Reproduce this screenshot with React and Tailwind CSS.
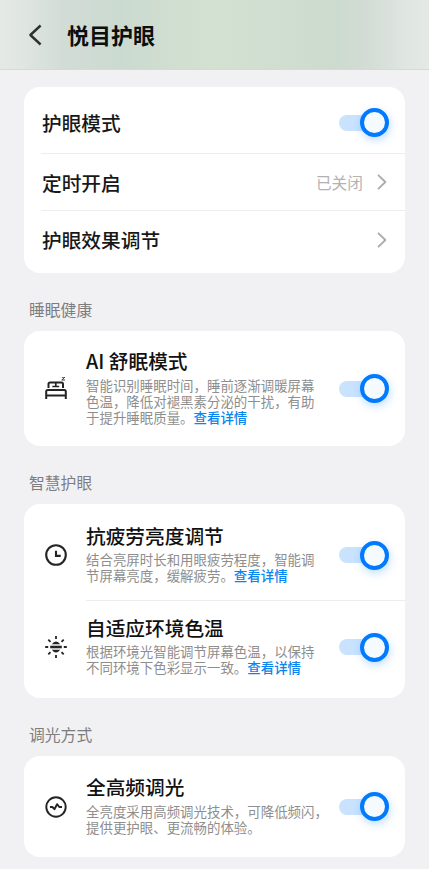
import React, { useState } from "react";

const Toggle = ({ label }) => {
  const [on, setOn] = useState(true);

  return (
    <button
      role="switch"
      aria-checked={on}
      aria-label={label}
      onClick={() => setOn(!on)}
      className={`flex h-[29px] w-[50px] shrink-0 items-center ${on ? "justify-end" : "justify-start"}`}
    >
      <span className={`h-4 w-[30.5px] rounded-l-full ${on ? "-mr-[10px] bg-[#c9e3ff]" : "bg-gray-200"}`}></span>
      <span
        className={`size-[29px] shrink-0 rounded-full border-4 bg-[#f5faff] ${
          on ? "border-[#007aff] shadow-[1px_3px_8px_rgba(0,122,255,0.25)]" : "border-gray-400"
        }`}
      ></span>
    </button>
  );
};

const Chevron = () => (
  <svg className="h-4 w-[10px]" viewBox="0 0 10 16" fill="none" stroke="#ababab" strokeWidth="1.8">
    <path d="M1 0.8 8.4 8 1 15.2" strokeLinejoin="round" />
  </svg>
);

const BedIcon = () => (
  <svg className="size-6" viewBox="0 0 24 24" fill="none" stroke="#242424" strokeWidth="2">
    <path d="M4.5 11V7Q4.5 5.5 6 5.5H17.5Q19 5.5 19 7V11" />
    <path d="M8.3 9.5H15.2" strokeWidth="1.5" />
    <path d="M11.8 5.5V9.5" strokeWidth="1.7" />
    <path d="M2.2 22V14.5Q2.2 13 3.7 13H20.3Q21.8 13 21.8 14.5V22" />
    <path d="M2.2 18.5H21.8" />
    <path d="M17.8 0.2H20.8L17.8 3H21" strokeWidth="0.9" />
  </svg>
);

const ClockIcon = () => (
  <svg className="size-6" viewBox="0 0 24 24" fill="none" stroke="#242424" strokeWidth="2.1">
    <circle cx="12" cy="12" r="9.8" />
    <path d="M12 7.7V12.9H16.7" />
  </svg>
);

const SunIcon = () => (
  <svg className="size-6" viewBox="0 0 24 24" fill="none" stroke="#242424" strokeWidth="1.8">
    <path d="M12 1V4M12 20V23M1.2 12H4.2M19.8 12H22.8M4.3 4.6 6.5 6.8M17.5 6.8 19.7 4.6M4.3 19.4 6.5 17.2M17.5 17.2 19.7 19.4" />
    <path d="M6.2 12H17.8" strokeWidth="2.6" />
    <path d="M7.8 9.3Q9.6 6.6 12 6.6T16.2 9.3ZM7.8 14.7Q9.6 17.4 12 17.4T16.2 14.7Z" fill="#242424" stroke="none" />
  </svg>
);

const PulseIcon = () => (
  <svg className="size-6" viewBox="0 0 24 24" fill="none" stroke="#242424" strokeWidth="1.9">
    <circle cx="12" cy="12" r="9.7" />
    <path d="M6 12H8.4L10.4 14.2 13.1 9.2 15.3 12H18" strokeLinejoin="round" />
  </svg>
);

const SectionTitle = ({ children }) => (
  <h2 className="flex h-[58px] items-center pt-[15px] pl-[5px] text-[15.8px] leading-6 text-[#7d7d80]">
    {children}
  </h2>
);

const Card = ({ className = "", children }) => (
  <section className={`rounded-2xl bg-white ${className}`}>{children}</section>
);

// Setting with an icon, description lines and a switch
const FeatureRow = ({ icon, title, lines, link, className = "" }) => (
  <div className={`flex items-center pr-[16.5px] pl-5 ${className}`}>
    {icon}
    <div className="ml-[18px] min-w-0 flex-1 pb-[5px]">
      <h3 className="text-[19.7px] leading-7 font-medium text-[#111]">{title}</h3>
      <p className="mt-[1.5px] text-[13.45px] leading-4 whitespace-nowrap text-[#8e8e8e]">
        {lines.map((line, index) => (
          <span key={index} className="block">
            {line}
            {link && index === lines.length - 1 && (
              <a href="#" className="font-medium text-[#0a84ee]">{link}</a>
            )}
          </span>
        ))}
      </p>
    </div>
    <Toggle label={title} />
  </div>
);

const App = () => {
  return (
    <div
      lang="zh-CN"
      className="h-[869px] w-full overflow-hidden bg-[#f1f1f4] font-['Noto_Sans_CJK_SC',sans-serif]"
    >
      <header className="flex h-[70px] items-center border-b border-[#d4dbd7] bg-[linear-gradient(90deg,#e4e9e6_0%,#dfe5e1_6%,#d2dcd6_15%,#cbdad0_28%,#d1dfd1_42%,#d3e1d1_50%,#d1dfd1_62%,#cddbcf_78%,#d2dbd4_85%,#dfe5e1_94%,#e4e9e6_100%)] pl-7">
        <button aria-label="返回">
          <svg className="h-[22px] w-[14px]" viewBox="0 0 14 22" fill="none" stroke="#2d322f" strokeWidth="2.4">
            <path d="M12.6 1.5 2.4 11 12.6 20.5" strokeLinejoin="round" />
          </svg>
        </button>
        <h1 className="ml-[25px] pb-[2px] text-[22px] leading-8 font-bold text-[#0c0f0d]">悦目护眼</h1>
      </header>

      <main className="px-6 pt-[17px]">
        <Card className="pl-[17px] text-[19.7px] font-medium text-[#181818]">
          <div className="flex h-[67px] items-center justify-between border-b border-[#ededee] pt-[5px] pr-[16.5px]">
            <span className="pl-px">护眼模式</span>
            <Toggle label="护眼模式" />
          </div>
          <div className="flex h-[57px] items-center justify-between border-b border-[#ededee] pt-px pr-[18px]">
            <span className="pl-px">定时开启</span>
            <span className="flex items-center gap-[14px] text-[15.7px] font-normal text-[#b2b2b2]">
              已关闭
              <Chevron />
            </span>
          </div>
          <div className="flex h-[62px] items-center justify-between pr-[18px] pb-[5px]">
            <span className="pl-px">护眼效果调节</span>
            <Chevron />
          </div>
        </Card>

        <SectionTitle>睡眠健康</SectionTitle>
        <Card>
          <FeatureRow
            className="h-[115px]"
            icon={<BedIcon />}
            title="AI 舒眠模式"
            lines={["智能识别睡眠时间，睡前逐渐调暖屏幕", "色温，降低对褪黑素分泌的干扰，有助", "于提升睡眠质量。"]}
            link="查看详情"
          />
        </Card>

        <SectionTitle>智慧护眼</SectionTitle>
        <Card>
          <FeatureRow
            className="h-24 pt-[6px]"
            icon={<ClockIcon />}
            title="抗疲劳亮度调节"
            lines={["结合亮屏时长和用眼疲劳程度，智能调", "节屏幕亮度，缓解疲劳。"]}
            link="查看详情"
          />
          <div className="ml-[62px] h-px bg-[#ededee]"></div>
          <FeatureRow
            className="h-[97px] pb-[5px]"
            icon={<SunIcon />}
            title="自适应环境色温"
            lines={["根据环境光智能调节屏幕色温，以保持", "不同环境下色彩显示一致。"]}
            link="查看详情"
          />
        </Card>

        <SectionTitle>调光方式</SectionTitle>
        <Card>
          <FeatureRow
            className="h-[101px]"
            icon={<PulseIcon />}
            title="全高频调光"
            lines={["全亮度采用高频调光技术，可降低频闪，", "提供更护眼、更流畅的体验。"]}
          />
        </Card>
      </main>
    </div>
  );
};

export default App;
